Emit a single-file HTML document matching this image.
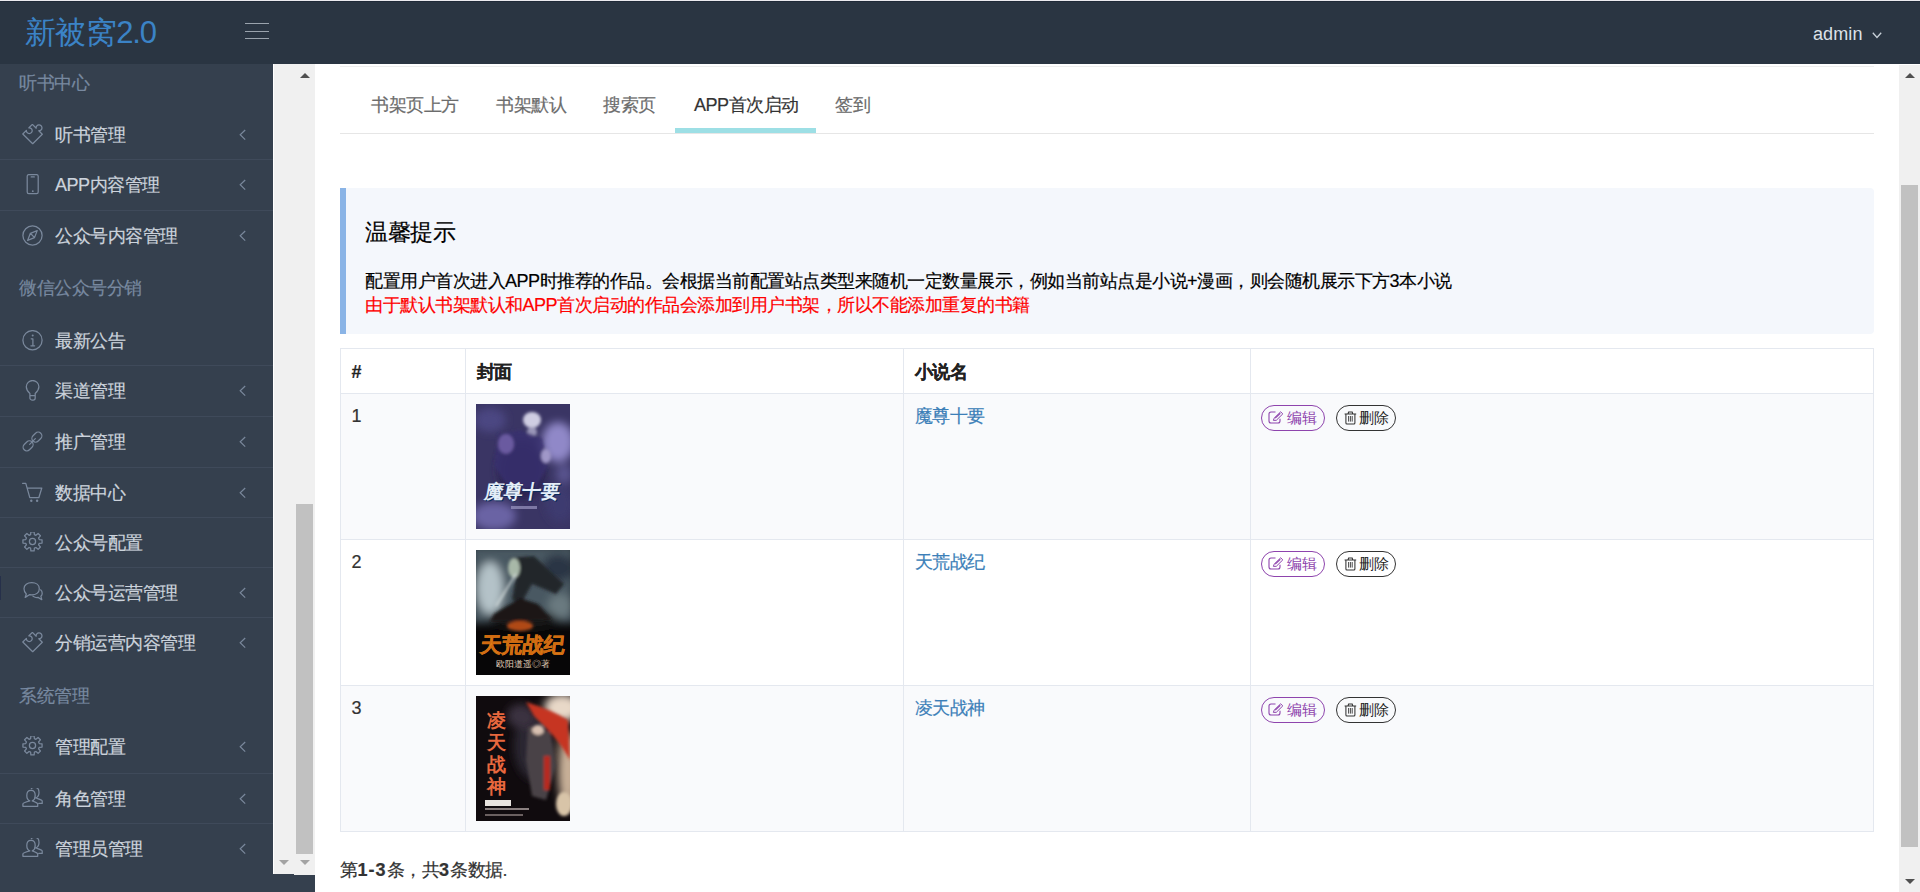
<!DOCTYPE html>
<html><head><meta charset="utf-8">
<style>
*{box-sizing:border-box;margin:0;padding:0}
html,body{width:1920px;height:892px;overflow:hidden;background:#fff;font-family:"Liberation Sans",sans-serif;}
.main,.side{-webkit-text-stroke:0.2px currentColor}
.hdr{position:absolute;left:0;top:0;width:1920px;height:64px;background:#2a3542;border-top:1px solid #ebebef;box-shadow:inset 0 1px 0 #202a38}
.logo{position:absolute;left:24.5px;top:11.5px;font-size:31px;letter-spacing:-0.4px;line-height:40px;color:#3b83c6;white-space:nowrap}
.ham{position:absolute;left:245px;width:24px;height:1px;background:#9aa3ad}
.admin{position:absolute;left:1813px;top:21px;font-size:18px;letter-spacing:0.1px;line-height:24px;color:#dce2e8}
.side{position:absolute;left:0;top:64px;width:273px;height:828px;background:#35404e;overflow:hidden}
.sh{position:absolute;left:19px;font-size:18px;letter-spacing:-0.5px;color:#7889a0;white-space:nowrap;line-height:24px}
.it{position:absolute;left:0;width:273px;height:50.5px;color:#ccd3dc;font-size:18px;letter-spacing:-0.5px;white-space:nowrap}
.it.b{border-top:1px solid #3f4a5a}
.it .tx{position:absolute;left:55px;top:13px;line-height:24px}
.it .ic{position:absolute;left:22px;top:14px;width:21px;height:21px}
.it .cv{position:absolute;left:238px;top:19px;width:10px;height:12px}
.sb1{position:absolute;left:273px;top:64px;width:21px;height:810px;background:#f0f0f0;border-left:1px solid #fff}
.sb2{position:absolute;left:294px;top:64px;width:21px;height:811px;background:#f0f0f0}
.main{position:absolute;left:315px;top:64px;width:1584px;height:828px;background:#fff;overflow:hidden}
.sbr{position:absolute;left:1899px;top:65px;width:21px;height:827px;background:#f0f0f0}
.tabs{position:absolute;left:25px;top:2px;width:1534px;height:68px;border-top:1px solid #eeeeee;border-bottom:1px solid #e6e6e6}
.tab{position:absolute;top:0;height:67px;font-size:18px;letter-spacing:-0.5px;line-height:24px;color:#6c6c6c;padding-top:25.5px;white-space:nowrap}
.tab.act{color:#333;}
.uline{position:absolute;left:335px;top:61px;width:141px;height:5px;background:#9ddfe5}
.callout{position:absolute;left:25px;top:124px;width:1534px;height:146px;background:#f4f7fc;border-radius:0 4px 4px 0}
.callout:before{content:"";position:absolute;left:0;top:0;width:6px;height:146px;background:#8ab4e6}
.ct{position:absolute;left:25px;top:27.5px;font-size:23px;letter-spacing:-0.3px;line-height:32px;color:#000;white-space:nowrap}
.cl{position:absolute;left:25px;font-size:18px;letter-spacing:-0.5px;line-height:24px;color:#222;white-space:nowrap}
table{position:absolute;left:25px;top:284px;width:1534px;border-collapse:collapse;font-size:18px;letter-spacing:-0.5px;color:#333}
td,th{border:1px solid #e4e8ef;text-align:left;vertical-align:top;padding:0 0 0 10.5px}
th{height:45px;font-weight:bold;padding-top:11px;line-height:24px;color:#222}
td{height:146px;padding-top:10px;line-height:24px}
tr.st td{background:#f9fafc}
.cov{display:block;margin-left:-1px;width:94px;height:125px;position:relative;overflow:hidden;letter-spacing:0}
.cov svg{display:block;-webkit-text-stroke:0}
a{color:#3c7fb8;text-decoration:none}
.btn{position:absolute;height:26px;border-radius:13px;font-size:15px;line-height:24px;white-space:nowrap;background:transparent}
.pg b{letter-spacing:1px}
.pg{position:absolute;left:25px;top:794px;font-size:18px;letter-spacing:-0.5px;line-height:24px;color:#333;white-space:nowrap}
.tri-up{position:absolute;width:0;height:0;border-left:5px solid transparent;border-right:5px solid transparent;border-bottom:5px solid #505050}
.tri-dn{position:absolute;width:0;height:0;border-left:5px solid transparent;border-right:5px solid transparent;border-top:5px solid #505050}
.thumb{position:absolute;background:#c1c1c1}
.btn{-webkit-text-stroke:0}
.mark{position:absolute;left:0;top:512px;width:1px;height:24px;background:#26304a}
</style></head><body>
<div class="hdr">
  <div class="logo">新被窝<span style="letter-spacing:-1.2px">2.0</span></div>
  <div class="ham" style="top:22px"></div>
  <div class="ham" style="top:30px"></div>
  <div class="ham" style="top:37px"></div>
  <div class="admin">admin</div><svg style="position:absolute;left:1872px;top:31px" width="10" height="7" viewBox="0 0 10 7"><path d="M0.8,0.8 L5,5.5 L9.2,0.8" stroke="#c8d0d8" stroke-width="1.3" fill="none"/></svg>
</div>
<div class="side" id="side">
<div class="sh" style="top:6.5px">听书中心</div>
<div class="it" style="top:45.5px"><svg class="ic" viewBox="0 0 21 21"><path stroke="#7a889c" stroke-width="1.25" fill="none" stroke-linejoin="round" stroke-linecap="round" d="M10.7,19.7 L0.8,10 L4.4,6.4 A2.9,2.9 0 1 0 6.9,3.8 L10.4,0.4 L14.2,4.2 A2.9,2.9 0 1 1 16.8,6.7 L20.3,10.2 Z"/></svg><span class="tx">听书管理</span><svg class="cv" viewBox="0 0 10 12"><path d="M7.2,1 L2.2,5.8 L7.2,10.6" stroke="#7a889c" stroke-width="1.2" fill="none"/></svg></div>
<div class="it b" style="top:95px"><svg class="ic" viewBox="0 0 21 21"><rect stroke="#7a889c" stroke-width="1.25" fill="none" stroke-linejoin="round" stroke-linecap="round" x="5.2" y="0.6" width="11" height="19" rx="1.6"/><path stroke="#7a889c" stroke-width="1.25" fill="none" stroke-linejoin="round" stroke-linecap="round" d="M9.2,2.9 H12.3"/><circle cx="10.8" cy="17.2" r="0.9" fill="#7a889c"/></svg><span class="tx">APP内容管理</span><svg class="cv" viewBox="0 0 10 12"><path d="M7.2,1 L2.2,5.8 L7.2,10.6" stroke="#7a889c" stroke-width="1.2" fill="none"/></svg></div>
<div class="it b" style="top:146px"><svg class="ic" viewBox="0 0 21 21"><circle stroke="#7a889c" stroke-width="1.25" fill="none" stroke-linejoin="round" stroke-linecap="round" cx="10.5" cy="10.5" r="9.6"/><path stroke="#7a889c" stroke-width="1.25" fill="none" stroke-linejoin="round" stroke-linecap="round" d="M15.2,5.6 L12.5,12.6 L5.6,15.4 L8.4,8.3 Z M8.4,8.3 L12.5,12.6"/></svg><span class="tx">公众号内容管理</span><svg class="cv" viewBox="0 0 10 12"><path d="M7.2,1 L2.2,5.8 L7.2,10.6" stroke="#7a889c" stroke-width="1.2" fill="none"/></svg></div>
<div class="sh" style="top:212px">微信公众号分销</div>
<div class="it" style="top:251.5px"><svg class="ic" viewBox="0 0 21 21"><circle stroke="#7a889c" stroke-width="1.25" fill="none" stroke-linejoin="round" stroke-linecap="round" cx="10.5" cy="10.2" r="9.6"/><circle cx="10.7" cy="5.6" r="1" fill="#7a889c"/><path stroke="#7a889c" stroke-width="1.25" fill="none" stroke-linejoin="round" stroke-linecap="round" d="M9.2,8.8 H10.9 V15.8 M8.9,15.8 H12.6"/></svg><span class="tx">最新公告</span></div>
<div class="it b" style="top:301px"><svg class="ic" viewBox="0 0 21 21"><path stroke="#7a889c" stroke-width="1.25" fill="none" stroke-linejoin="round" stroke-linecap="round" d="M7.9,13.5 C5.9,11.7 4.3,10 4.3,6.8 A6.3,6.3 0 0 1 16.9,6.8 C16.9,10 15.2,11.7 13.2,13.5 V18 A2,2 0 0 1 11.2,20 H9.9 A2,2 0 0 1 7.9,18 Z M7.9,15.7 H13.2"/></svg><span class="tx">渠道管理</span><svg class="cv" viewBox="0 0 10 12"><path d="M7.2,1 L2.2,5.8 L7.2,10.6" stroke="#7a889c" stroke-width="1.2" fill="none"/></svg></div>
<div class="it b" style="top:352px"><svg class="ic" viewBox="0 0 21 21"><g transform="rotate(45 10.5 10.5)"><rect stroke="#7a889c" stroke-width="1.25" fill="none" stroke-linejoin="round" stroke-linecap="round" x="6.8" y="-1.2" width="7.4" height="11" rx="3.7"/><rect stroke="#7a889c" stroke-width="1.25" fill="none" stroke-linejoin="round" stroke-linecap="round" x="6.8" y="11.2" width="7.4" height="11" rx="3.7"/><path stroke="#7a889c" stroke-width="1.25" fill="none" stroke-linejoin="round" stroke-linecap="round" d="M10.5,6.5 V14.5"/></g></svg><span class="tx">推广管理</span><svg class="cv" viewBox="0 0 10 12"><path d="M7.2,1 L2.2,5.8 L7.2,10.6" stroke="#7a889c" stroke-width="1.2" fill="none"/></svg></div>
<div class="it b" style="top:402.5px"><svg class="ic" viewBox="0 0 21 21"><path stroke="#7a889c" stroke-width="1.25" fill="none" stroke-linejoin="round" stroke-linecap="round" d="M0.6,1.3 H3.8 L7.8,15.7 H16.8 L19.8,6 H5.9"/><circle cx="9.3" cy="18.7" r="1.2" fill="#7a889c"/><circle cx="15.1" cy="18.7" r="1.2" fill="#7a889c"/></svg><span class="tx">数据中心</span><svg class="cv" viewBox="0 0 10 12"><path d="M7.2,1 L2.2,5.8 L7.2,10.6" stroke="#7a889c" stroke-width="1.2" fill="none"/></svg></div>
<div class="it b" style="top:452.5px"><svg class="ic" viewBox="0 0 21 21"><path stroke="#7a889c" stroke-width="1.25" fill="none" stroke-linejoin="round" stroke-linecap="round" d="M8.62,2.66 L8.86,-0.16 L12.14,-0.16 L12.38,2.66 L13.94,3.30 L16.10,1.48 L18.42,3.80 L16.60,5.96 L17.24,7.52 L20.06,7.76 L20.06,11.04 L17.24,11.28 L16.60,12.84 L18.42,15.00 L16.10,17.32 L13.94,15.50 L12.38,16.14 L12.14,18.96 L8.86,18.96 L8.62,16.14 L7.06,15.50 L4.90,17.32 L2.58,15.00 L4.40,12.84 L3.76,11.28 L0.94,11.04 L0.94,7.76 L3.76,7.52 L4.40,5.96 L2.58,3.80 L4.90,1.48 L7.06,3.30 Z"/><circle stroke="#7a889c" stroke-width="1.25" fill="none" stroke-linejoin="round" stroke-linecap="round" cx="10.5" cy="9.4" r="3.1"/></svg><span class="tx">公众号配置</span></div>
<div class="it b" style="top:502.5px"><svg class="ic" viewBox="0 0 21 21"><path stroke="#7a889c" stroke-width="1.25" fill="none" stroke-linejoin="round" stroke-linecap="round" d="M 4.3,12.0 L 3.2,15.4 L 7.4,12.7 C 8.2,12.8 8.9,12.9 9.7,12.9 C 14,12.9 17.3,10.6 17.3,6.8 C 17.3,3.0 14,0.7 9.7,0.7 C 5.4,0.7 2,3.0 2,6.8 C 2,8.9 2.9,10.7 4.3,12.0 Z M 18.6,7.8 C 19.8,8.8 20.2,9.8 20.2,11.2 C 20.2,12.5 19.7,13.5 18.9,14.3 L 19.8,17.7 L 16,15.4 C 15,15.6 12.6,15.2 11,14.2"/></svg><span class="tx">公众号运营管理</span><svg class="cv" viewBox="0 0 10 12"><path d="M7.2,1 L2.2,5.8 L7.2,10.6" stroke="#7a889c" stroke-width="1.2" fill="none"/></svg></div>
<div class="it b" style="top:553px"><svg class="ic" viewBox="0 0 21 21"><path stroke="#7a889c" stroke-width="1.25" fill="none" stroke-linejoin="round" stroke-linecap="round" d="M10.7,19.7 L0.8,10 L4.4,6.4 A2.9,2.9 0 1 0 6.9,3.8 L10.4,0.4 L14.2,4.2 A2.9,2.9 0 1 1 16.8,6.7 L20.3,10.2 Z"/></svg><span class="tx">分销运营内容管理</span><svg class="cv" viewBox="0 0 10 12"><path d="M7.2,1 L2.2,5.8 L7.2,10.6" stroke="#7a889c" stroke-width="1.2" fill="none"/></svg></div>
<div class="sh" style="top:619.5px">系统管理</div>
<div class="it" style="top:658px"><svg class="ic" viewBox="0 0 21 21"><path stroke="#7a889c" stroke-width="1.25" fill="none" stroke-linejoin="round" stroke-linecap="round" d="M8.62,2.66 L8.86,-0.16 L12.14,-0.16 L12.38,2.66 L13.94,3.30 L16.10,1.48 L18.42,3.80 L16.60,5.96 L17.24,7.52 L20.06,7.76 L20.06,11.04 L17.24,11.28 L16.60,12.84 L18.42,15.00 L16.10,17.32 L13.94,15.50 L12.38,16.14 L12.14,18.96 L8.86,18.96 L8.62,16.14 L7.06,15.50 L4.90,17.32 L2.58,15.00 L4.40,12.84 L3.76,11.28 L0.94,11.04 L0.94,7.76 L3.76,7.52 L4.40,5.96 L2.58,3.80 L4.90,1.48 L7.06,3.30 Z"/><circle stroke="#7a889c" stroke-width="1.25" fill="none" stroke-linejoin="round" stroke-linecap="round" cx="10.5" cy="9.4" r="3.1"/></svg><span class="tx">管理配置</span><svg class="cv" viewBox="0 0 10 12"><path d="M7.2,1 L2.2,5.8 L7.2,10.6" stroke="#7a889c" stroke-width="1.2" fill="none"/></svg></div>
<div class="it b" style="top:708.5px"><svg class="ic" viewBox="0 0 21 21"><g transform="translate(0,-1.3)"><path stroke="#7a889c" stroke-width="1.25" fill="none" stroke-linejoin="round" stroke-linecap="round" d="M7.8,14.2 C5.7,13.2 4.8,11 4.8,8.7 C4.8,6.2 5.9,3.7 9,3.7 C12.1,3.7 13.2,6.2 13.2,8.7 C13.2,11 12.3,13.2 10.3,14.2 C13,15.2 15.7,16.1 15.7,17.3 V19.6 H0.9 V17.3 C0.9,16.1 4.5,15.1 7.8,14.2 Z M9.4,1.8 C10.2,1.1 11.2,0.6 12.7,0.6 C15.7,0.6 17,3.1 17,5.7 C17,8 15.9,10.2 13.9,11.3 C16.6,12.3 20.2,13.2 20.2,14.4 V16.7 H16.8"/></g></svg><span class="tx">角色管理</span><svg class="cv" viewBox="0 0 10 12"><path d="M7.2,1 L2.2,5.8 L7.2,10.6" stroke="#7a889c" stroke-width="1.2" fill="none"/></svg></div>
<div class="it b" style="top:759px"><svg class="ic" viewBox="0 0 21 21"><g transform="translate(0,-1.3)"><path stroke="#7a889c" stroke-width="1.25" fill="none" stroke-linejoin="round" stroke-linecap="round" d="M7.8,14.2 C5.7,13.2 4.8,11 4.8,8.7 C4.8,6.2 5.9,3.7 9,3.7 C12.1,3.7 13.2,6.2 13.2,8.7 C13.2,11 12.3,13.2 10.3,14.2 C13,15.2 15.7,16.1 15.7,17.3 V19.6 H0.9 V17.3 C0.9,16.1 4.5,15.1 7.8,14.2 Z M9.4,1.8 C10.2,1.1 11.2,0.6 12.7,0.6 C15.7,0.6 17,3.1 17,5.7 C17,8 15.9,10.2 13.9,11.3 C16.6,12.3 20.2,13.2 20.2,14.4 V16.7 H16.8"/></g></svg><span class="tx">管理员管理</span><svg class="cv" viewBox="0 0 10 12"><path d="M7.2,1 L2.2,5.8 L7.2,10.6" stroke="#7a889c" stroke-width="1.2" fill="none"/></svg></div>
<div class="mark"></div></div>
<div style="position:absolute;left:273px;top:874px;width:42px;height:18px;background:#35404e"></div>
<div class="sb1"><div class="tri-dn" style="left:5px;top:796px;border-top-color:#a3a3a3"></div></div>
<div class="sb2"><div class="tri-up" style="left:5.5px;top:9px"></div><div class="thumb" style="left:2px;top:440px;width:17px;height:350px"></div><div class="tri-dn" style="left:5.5px;top:796px;border-top-color:#a3a3a3"></div></div>
<div class="main">
  <div class="tabs">
    <div class="tab" style="left:31px">书架页上方</div>
    <div class="tab" style="left:156px">书架默认</div>
    <div class="tab" style="left:263px">搜索页</div>
    <div class="tab act" style="left:354px">APP首次启动</div>
    <div class="tab" style="left:495px">签到</div>
    <div class="uline"></div>
  </div>
  <div class="callout">
    <div class="ct">温馨提示</div>
    <div class="cl" style="top:80.5px;color:#000">配置用户首次进入APP时推荐的作品。会根据当前配置站点类型来随机一定数量展示，例如当前站点是小说+漫画，则会随机展示下方3本小说</div>
    <div class="cl" style="top:104.5px;color:#ff0000">由于默认书架默认和APP首次启动的作品会添加到用户书架，所以不能添加重复的书籍</div>
  </div>
  <table>
    <colgroup><col style="width:125px"><col style="width:438px"><col style="width:347px"><col></colgroup>
    <tr><th>#</th><th>封面</th><th>小说名</th><th></th></tr>
    <tr class="st"><td>1</td><td><div class="cov c1"><svg width="94" height="125" viewBox="0 0 94 125"><defs><filter id="b1" x="-50%" y="-50%" width="200%" height="200%"><feGaussianBlur stdDeviation="4"/></filter><filter id="b2" x="-50%" y="-50%" width="200%" height="200%"><feGaussianBlur stdDeviation="1.6"/></filter></defs>
<rect width="94" height="125" fill="#3a3564"/>
<g filter="url(#b1)"><ellipse cx="82" cy="38" rx="16" ry="20" fill="#9088c8"/><ellipse cx="14" cy="16" rx="16" ry="12" fill="#4c4682"/><ellipse cx="46" cy="66" rx="24" ry="30" fill="#2a2450"/><ellipse cx="18" cy="112" rx="22" ry="14" fill="#6a64a4"/><ellipse cx="84" cy="100" rx="14" ry="18" fill="#3e3a70"/><ellipse cx="88" cy="70" rx="8" ry="10" fill="#5a5490"/></g>
<g filter="url(#b2)"><ellipse cx="56" cy="16" rx="9" ry="8" fill="#cfcde2"/><ellipse cx="56" cy="28" rx="5" ry="5" fill="#9a96b8"/><path d="M22,30 L44,26 L66,34 L72,62 L60,84 L34,86 L18,62 Z" fill="#3a3070" opacity=".8"/><ellipse cx="30" cy="40" rx="8" ry="10" fill="#6a5aa0"/><ellipse cx="70" cy="52" rx="5" ry="7" fill="#a098c8"/></g>
<text x="47" y="95" text-anchor="middle" font-size="19" font-weight="bold" fill="#0d2a5a" transform="skewX(-10)" dx="16">魔尊十要</text>
<text x="46" y="94" text-anchor="middle" font-size="19" font-weight="bold" fill="#e4eef8" transform="skewX(-10)" dx="16">魔尊十要</text>
<rect x="35" y="102" width="26" height="3" fill="#9a96c0" opacity=".7"/>
</svg></div></td><td><a>魔尊十要</a></td><td></td></tr>
    <tr><td>2</td><td><div class="cov c2"><svg width="94" height="125" viewBox="0 0 94 125"><defs><filter id="b3" x="-50%" y="-50%" width="200%" height="200%"><feGaussianBlur stdDeviation="4"/></filter><filter id="b4" x="-50%" y="-50%" width="200%" height="200%"><feGaussianBlur stdDeviation="1.4"/></filter></defs>
<rect width="94" height="125" fill="#070607"/>
<g filter="url(#b3)"><rect x="-5" y="-5" width="104" height="78" fill="#4a5862"/><ellipse cx="14" cy="38" rx="13" ry="26" fill="#b4c2c8"/><ellipse cx="82" cy="18" rx="16" ry="14" fill="#2a3644"/><ellipse cx="84" cy="56" rx="12" ry="12" fill="#6a7a80"/><ellipse cx="48" cy="70" rx="34" ry="10" fill="#151312"/></g>
<g filter="url(#b4)"><path d="M34,8 L58,6 L88,34 L80,44 L56,34 L46,52 L36,50 L40,28 Z" fill="#24262a"/><ellipse cx="38" cy="18" rx="6" ry="10" fill="#a8b8a8"/><path d="M20,56 L40,24" stroke="#d8e0e0" stroke-width="1.5"/><path d="M18,64 L44,48 L62,54 L76,70 L14,72 Z" fill="#1a1716"/><ellipse cx="44" cy="76" rx="13" ry="5" fill="#b04a16"/></g>
<text x="47" y="102" text-anchor="middle" font-size="21" font-weight="bold" fill="#f8b434" stroke="#d06a10" stroke-width=".5" transform="skewX(-6)" dx="10">天荒战纪</text>
<text x="47" y="117" text-anchor="middle" font-size="9" fill="#e0d0b8">欧阳道遥◎著</text>
</svg></div></td><td><a>天荒战纪</a></td><td></td></tr>
    <tr class="st"><td>3</td><td><div class="cov c3"><svg width="94" height="125" viewBox="0 0 94 125"><defs><filter id="b5" x="-50%" y="-50%" width="200%" height="200%"><feGaussianBlur stdDeviation="4"/></filter><filter id="b6" x="-50%" y="-50%" width="200%" height="200%"><feGaussianBlur stdDeviation="1.6"/></filter></defs>
<rect width="94" height="125" fill="#100b0e"/>
<g filter="url(#b5)"><ellipse cx="86" cy="12" rx="18" ry="14" fill="#e8d8c8"/><ellipse cx="92" cy="75" rx="10" ry="40" fill="#c8b098"/><ellipse cx="58" cy="50" rx="20" ry="34" fill="#2c2530"/><ellipse cx="45" cy="20" rx="14" ry="12" fill="#3a3040"/></g>
<g filter="url(#b6)"><path d="M50,6 Q76,14 92,24 L94,64 Q84,46 70,32 L58,20 Z" fill="#c63420"/><path d="M52,30 L74,36 L80,70 L70,104 L56,100 L50,64 Z" fill="#4a4246"/><ellipse cx="62" cy="34" rx="6" ry="5" fill="#d8c0b0"/><rect x="68" y="60" width="6" height="34" fill="#b82a1a"/><ellipse cx="88" cy="108" rx="8" ry="12" fill="#d8c4a8"/></g>
<g font-size="19" font-weight="bold" fill="#e8683e" text-anchor="middle"><text x="20" y="31">凌</text><text x="20" y="53">天</text><text x="20" y="75">战</text><text x="20" y="97">神</text></g>
<rect x="9" y="104" width="26" height="6" fill="#e8e4e0"/>
<rect x="9" y="112" width="44" height="2" fill="#8a8080"/><rect x="9" y="118" width="38" height="2" fill="#6a6060"/>
</svg></div></td><td><a>凌天战神</a></td><td></td></tr>
  </table>
<div class="btn" style="left:946px;top:341px;width:64px;border:1px solid #8e44ad;color:#8e44ad"><svg style="position:absolute;left:6px;top:5px" width="16" height="13" viewBox="0 0 16 13"><path d="M7.5,1 H3 A2,2 0 0 0 1,3 V10 A2,2 0 0 0 3,12 H10 A2,2 0 0 0 12,10 V7.8" stroke="#8e44ad" stroke-width="1.1" fill="none"/><path d="M5.4,9.4 L6.1,7.2 L12.7,0.8 L14.8,2.9 L8.3,9.3 Z" stroke="#8e44ad" stroke-width="1" fill="none"/><path d="M7.2,7.1 L12.3,2.2" stroke="#8e44ad" stroke-width="1.2"/></svg><span style="position:absolute;left:25px;top:0">编辑</span></div><div class="btn" style="left:1021px;top:341px;width:60px;border:1px solid #333;color:#222"><svg style="position:absolute;left:6.5px;top:5px" width="13" height="14" viewBox="0 0 13 14"><path d="M0.6,3 H12.2 M4,3 L4.6,1 H8.2 L8.8,3 M1.9,3 V12 A1,1 0 0 0 2.9,13 H9.9 A1,1 0 0 0 10.9,12 V3" stroke="#333" stroke-width="1.05" fill="none"/><path d="M4.6,5 V10.6 M6.4,5 V10.6 M8.2,5 V10.6" stroke="#333" stroke-width="0.9"/></svg><span style="position:absolute;left:22px;top:0">删除</span></div><div class="btn" style="left:946px;top:487px;width:64px;border:1px solid #8e44ad;color:#8e44ad"><svg style="position:absolute;left:6px;top:5px" width="16" height="13" viewBox="0 0 16 13"><path d="M7.5,1 H3 A2,2 0 0 0 1,3 V10 A2,2 0 0 0 3,12 H10 A2,2 0 0 0 12,10 V7.8" stroke="#8e44ad" stroke-width="1.1" fill="none"/><path d="M5.4,9.4 L6.1,7.2 L12.7,0.8 L14.8,2.9 L8.3,9.3 Z" stroke="#8e44ad" stroke-width="1" fill="none"/><path d="M7.2,7.1 L12.3,2.2" stroke="#8e44ad" stroke-width="1.2"/></svg><span style="position:absolute;left:25px;top:0">编辑</span></div><div class="btn" style="left:1021px;top:487px;width:60px;border:1px solid #333;color:#222"><svg style="position:absolute;left:6.5px;top:5px" width="13" height="14" viewBox="0 0 13 14"><path d="M0.6,3 H12.2 M4,3 L4.6,1 H8.2 L8.8,3 M1.9,3 V12 A1,1 0 0 0 2.9,13 H9.9 A1,1 0 0 0 10.9,12 V3" stroke="#333" stroke-width="1.05" fill="none"/><path d="M4.6,5 V10.6 M6.4,5 V10.6 M8.2,5 V10.6" stroke="#333" stroke-width="0.9"/></svg><span style="position:absolute;left:22px;top:0">删除</span></div><div class="btn" style="left:946px;top:633px;width:64px;border:1px solid #8e44ad;color:#8e44ad"><svg style="position:absolute;left:6px;top:5px" width="16" height="13" viewBox="0 0 16 13"><path d="M7.5,1 H3 A2,2 0 0 0 1,3 V10 A2,2 0 0 0 3,12 H10 A2,2 0 0 0 12,10 V7.8" stroke="#8e44ad" stroke-width="1.1" fill="none"/><path d="M5.4,9.4 L6.1,7.2 L12.7,0.8 L14.8,2.9 L8.3,9.3 Z" stroke="#8e44ad" stroke-width="1" fill="none"/><path d="M7.2,7.1 L12.3,2.2" stroke="#8e44ad" stroke-width="1.2"/></svg><span style="position:absolute;left:25px;top:0">编辑</span></div><div class="btn" style="left:1021px;top:633px;width:60px;border:1px solid #333;color:#222"><svg style="position:absolute;left:6.5px;top:5px" width="13" height="14" viewBox="0 0 13 14"><path d="M0.6,3 H12.2 M4,3 L4.6,1 H8.2 L8.8,3 M1.9,3 V12 A1,1 0 0 0 2.9,13 H9.9 A1,1 0 0 0 10.9,12 V3" stroke="#333" stroke-width="1.05" fill="none"/><path d="M4.6,5 V10.6 M6.4,5 V10.6 M8.2,5 V10.6" stroke="#333" stroke-width="0.9"/></svg><span style="position:absolute;left:22px;top:0">删除</span></div>
  <div class="pg">第<b>1-3</b>条，共<b>3</b>条数据.</div>
</div>
<div class="sbr"><div class="tri-up" style="left:5.5px;top:8px"></div><div class="thumb" style="left:2px;top:120px;width:17px;height:662px"></div><div class="tri-dn" style="left:5.5px;top:814px"></div></div>
</body></html>
